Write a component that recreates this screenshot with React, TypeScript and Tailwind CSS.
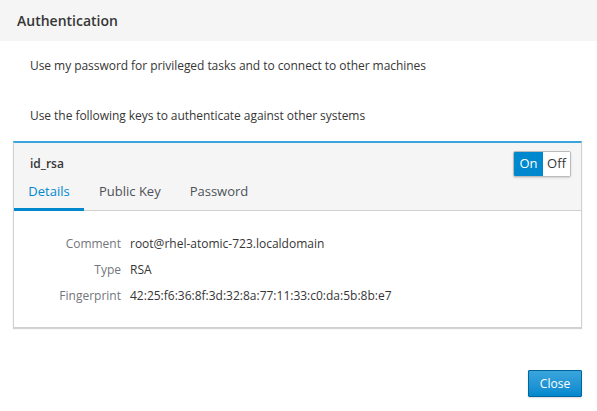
import React from "react";

const rows = [
  { label: "Comment", value: "root@rhel-atomic-723.localdomain" },
  { label: "Type", value: "RSA" },
  { label: "Fingerprint", value: "42:25:f6:36:8f:3d:32:8a:77:11:33:c0:da:5b:8b:e7" },
];

export default function App() {
  return (
    <div className="w-[597px] h-[411px] bg-white text-[12px] text-[#363636] font-['Open_Sans',sans-serif] flex flex-col">
      <div className="h-[41px] bg-[#f5f5f5] flex items-center px-[17px]">
        <h4 className="text-[14px] font-semibold text-[#363636]">Authentication</h4>
      </div>

      <div className="pl-[13px] pr-[15px] flex-1 flex flex-col">
        <p className="pl-[17px] mt-[16px] leading-[18px] tracking-[-0.05px]">
          Use my password for privileged tasks and to connect to other machines
        </p>
        <p className="pl-[17px] mt-[32px] leading-[18px] tracking-[-0.05px]">
          Use the following keys to authenticate against other systems
        </p>

        <div className="mt-[16px] border border-[#d1d1d1] border-t-2 border-t-[#39a5dc] shadow-[0_1px_1px_rgba(3,3,3,0.175)]">
          <div className="bg-[#f5f5f5] border-b border-[#d1d1d1]">
            <div className="flex items-start justify-between pl-[16px] pr-[10px] pt-[8px]">
              <span className="font-semibold mt-[4px]">id_rsa</span>
              <div className="flex h-[26px] border border-[#bbb] rounded-[2px] overflow-hidden text-[13px] shadow-[0_1px_2px_rgba(0,0,0,0.15)]">
                <span className="w-[29px] bg-[#0088ce] text-white flex items-center justify-center">On</span>
                <span className="w-[27px] bg-white text-[#363636] flex items-center justify-center">Off</span>
              </div>
            </div>
            <div className="flex mt-[3px] text-[13px]">
              <span className="w-[70px] text-center text-[#0088ce] border-b-[3px] border-[#0088ce] pt-[2px] pb-[6px] -mb-px">
                Details
              </span>
              <span className="px-[15px] text-[#4d5258] pt-[2px] pb-[6px]">Public Key</span>
              <span className="px-[14px] text-[#4d5258] pt-[2px] pb-[6px]">Password</span>
            </div>
          </div>

          <div className="pt-[24px] pb-[22px] flex flex-col gap-[8px]">
            {rows.map((r) => (
              <div key={r.label} className="flex leading-[18px]">
                <span className="w-[107px] text-right text-[#72767b]">{r.label}</span>
                <span className="ml-[9px]">{r.value}</span>
              </div>
            ))}
          </div>
        </div>

        <div className="mt-auto mb-[14px] flex justify-end">
          <button className="h-[27px] w-[54px] text-[12px] text-white bg-gradient-to-b from-[#39a5dc] to-[#0088ce] border border-[#00659c] rounded-[1px] shadow-[0_1px_2px_rgba(0,0,0,0.15)]">
            Close
          </button>
        </div>
      </div>
    </div>
  );
}
